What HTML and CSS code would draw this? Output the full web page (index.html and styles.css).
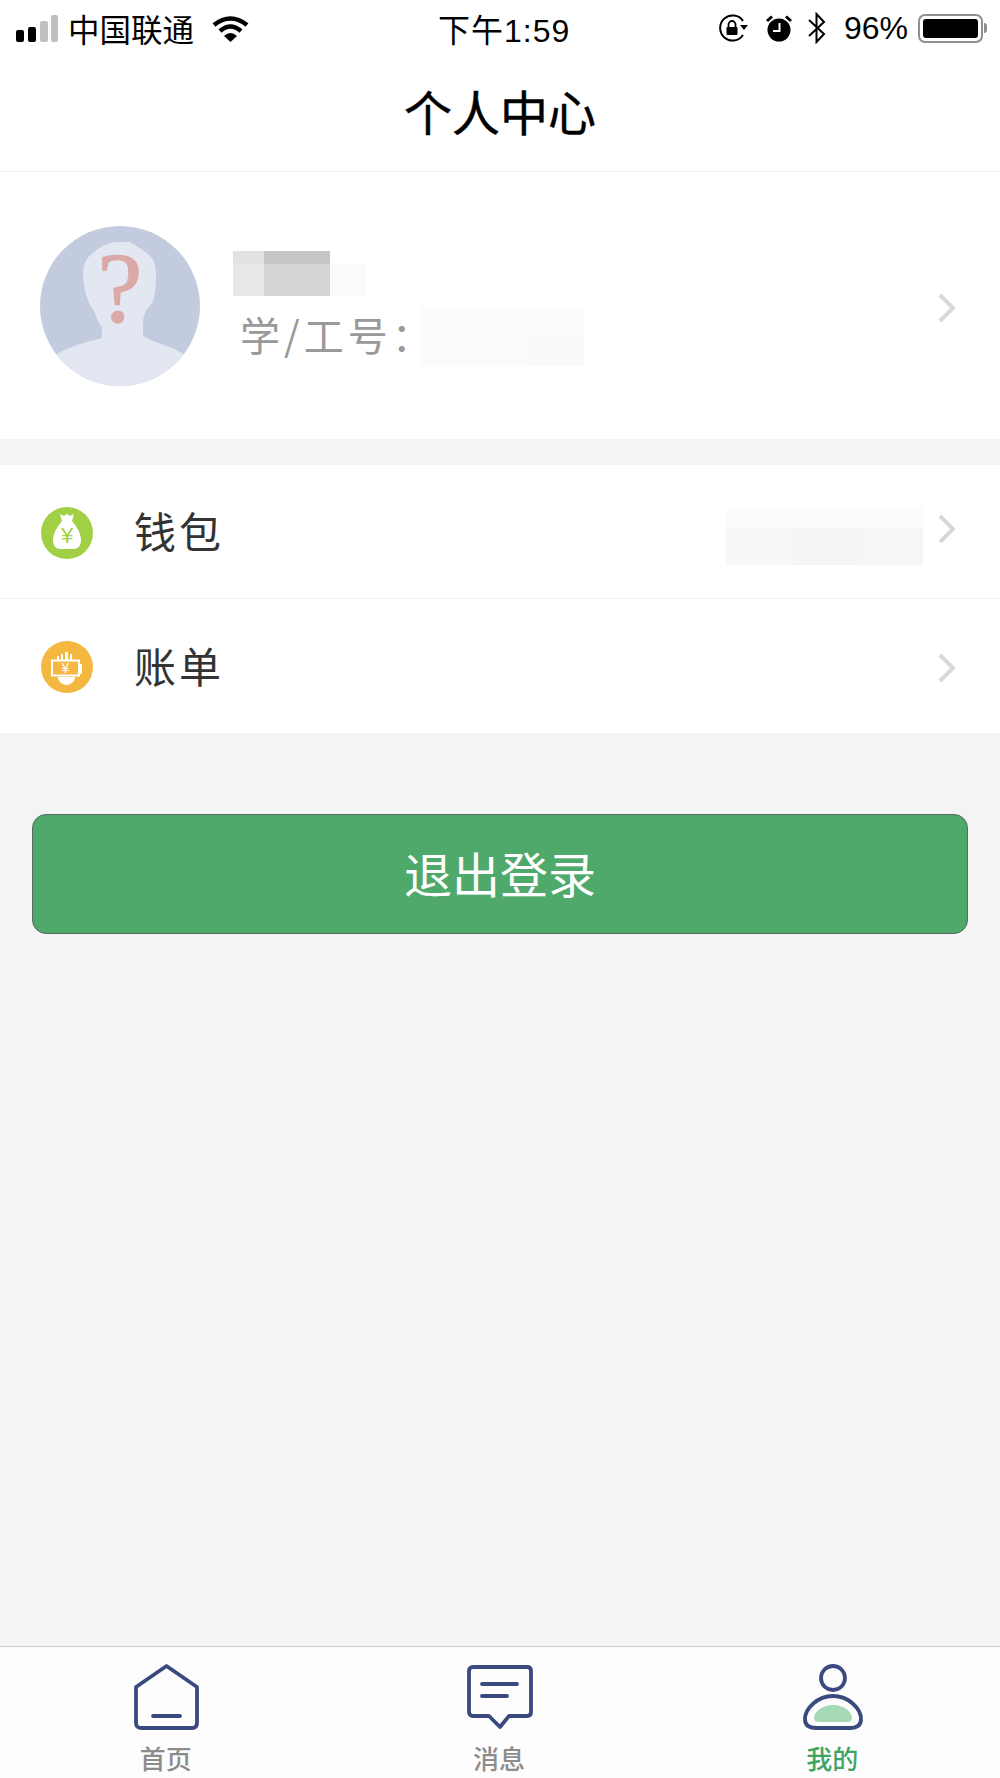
FILE: index.html
```html
<!DOCTYPE html>
<html>

<head>
    <meta charset="utf-8" />
    <title>个人中心</title>
    <link rel="stylesheet" href="styles.css">
</head>

<body>
    <div id="app">
        <div class="status">
            <div class="status-left">
                <svg class="signal" viewBox="0 0 42 27">
                    <rect x="0" y="15" width="8" height="12" rx="2" fill="#000" />
                    <rect x="12" y="12" width="8" height="15" rx="2" fill="#000" />
                    <rect x="24" y="6" width="8" height="21" rx="2" fill="#c0c0c0" />
                    <rect x="35" y="0" width="7" height="27" rx="2" fill="#c0c0c0" />
                </svg>
                <span class="carrier">中国联通</span>
                <svg class="wifi" viewBox="0 0 37 27">
                    <path d="M2 10 Q18.5 -3 35 10" fill="none" stroke="#000" stroke-width="4.5" />
                    <path d="M8 16 Q18.5 7 29 16" fill="none" stroke="#000" stroke-width="4.5" />
                    <path d="M12 21 Q18.5 15 25 21 L18.5 27 Z" fill="#000" />
                </svg>
            </div>
            <span class="time">下午1:59</span>
            <div class="status-right">
                <svg class="rotlock" viewBox="0 0 30 28">
                    <path d="M25 21 A12.5 12.5 0 1 1 25 7" fill="none" stroke="#000" stroke-width="2" />
                    <path d="M22 11 L30 11 L26 16 Z" fill="#000" />
                    <path d="M10.5 13 V10.5 A3.5 3.5 0 0 1 17.5 10.5 V13" fill="none" stroke="#000" stroke-width="1.8" />
                    <rect x="8.5" y="13" width="11" height="8" rx="1" fill="#000" />
                </svg>
                <svg class="alarm" viewBox="0 0 26 27">
                    <circle cx="13" cy="15" r="11.5" fill="#000" />
                    <path d="M1 6 L6 1.5 M25 6 L20 1.5" stroke="#000" stroke-width="3" />
                    <path d="M13.5 8 V16 H7" fill="none" stroke="#fff" stroke-width="2" />
                </svg>
                <svg class="bt" viewBox="0 0 20 32">
                    <path d="M2 8 L17 22 L9.5 30 V2 L17 10 L2 24" fill="none" stroke="#000" stroke-width="2" />
                </svg>
                <span class="battery-text">96%</span>
                <div class="battery">
                    <div class="battery-fill"></div>
                </div>
                <div class="battery-nub"></div>
            </div>
        </div>

        <div class="title">个人中心</div>

        <div class="main">
            <div class="profile">
                <svg class="avatar" viewBox="0 0 160 160">
                    <defs>
                        <clipPath id="round">
                            <circle cx="80" cy="80" r="80" />
                        </clipPath>
                    </defs>
                    <circle cx="80" cy="80" r="80" fill="#c3cbdf" />
                    <path clip-path="url(#round)" fill="#e3e7f1" d="M80 16 L90 16 C96 20 104 24 109 29 C115 34 116 40 116 50 C116 60 115 68 113 76 L107 83 C104 88 103 92 103 100 L103 110 L113 115 C124 119 134 122 145 129 L145 165 L15 165 L15 129 C26 123 36 119 50 115 L62 112 L62 102 C58 96 56 90 54 85 C49 78 47 72 45 65 C44 58 43 54 43 48 C43 38 46 32 52 28 C60 20 68 16 80 16 Z" />
                    <text class="avatar-mark" x="80" y="95" text-anchor="middle">?</text>
                </svg>
                <div class="profile-info">
                    <div class="mosaic mosaic-name">
                        <i class="t-e2"></i><i class="t-c6"></i><i class="t-ff"></i>
                        <i class="t-e8"></i><i class="t-d5"></i><i class="t-fb"></i>
                    </div>
                    <div class="id-row">
                        <span class="id-label">学/工号：</span>
                        <div class="mosaic mosaic-id">
                            <i class="t-fc"></i><i class="t-fc"></i><i class="t-fc"></i>
                            <i class="t-fb"></i><i class="t-fb"></i><i class="t-fa"></i>
                        </div>
                    </div>
                </div>
                <svg class="arrow arrow-low" viewBox="0 0 17 30">
                    <path d="M2 2 L15 15 L2 28" />
                </svg>
            </div>

            <div class="menu">
                <div class="menu-row line">
                    <svg class="menu-icon" viewBox="0 0 52 52">
                        <circle cx="26" cy="26" r="26" fill="#a2d045" />
                        <path fill="#fff" d="M19 7 L23 9 L26 7 L29 9 L33 7 L31 14 C35 19 40 26 40 33 C40 40 36 42 32 42 H20 C16 42 12 40 12 33 C12 26 17 19 21 14 Z" />
                        <text class="icon-yen yen-green" x="26" y="36" text-anchor="middle">¥</text>
                    </svg>
                    <span class="menu-text">钱包</span>
                    <div class="mosaic mosaic-wallet">
                        <i class="t-fc"></i><i class="t-fc"></i><i class="t-fc"></i>
                        <i class="t-f8"></i><i class="t-f5"></i><i class="t-f6"></i>
                    </div>
                    <svg class="arrow arrow-high" viewBox="0 0 17 30">
                        <path d="M2 2 L15 15 L2 28" />
                    </svg>
                </div>
                <div class="menu-row">
                    <svg class="menu-icon" viewBox="0 0 52 52">
                        <circle cx="26" cy="26" r="26" fill="#f4b740" />
                        <path fill="#fff" d="M16 19 V15 H18 V19 Z M20 19 V13 H22 V19 Z M24 19 V11 H27 V19 Z M29 19 V13 H31 V19 Z" />
                        <rect x="11" y="19.5" width="27" height="15" fill="none" stroke="#fff" stroke-width="2" />
                        <path fill="#fff" d="M39 23 H41 V33 H39 Z M17 36 H34 C34 40 30 44 25.5 44 C21 44 17 40 17 36 Z" />
                        <text class="icon-yen yen-orange" x="24.5" y="32" text-anchor="middle">¥</text>
                    </svg>
                    <span class="menu-text">账单</span>
                    <svg class="arrow arrow-low" viewBox="0 0 17 30">
                        <path d="M2 2 L15 15 L2 28" />
                    </svg>
                </div>
            </div>

            <div class="logout">退出登录</div>
        </div>

        <div class="tabs">
            <div class="tab">
                <svg class="tab-icon" viewBox="0 0 66 66">
                    <path class="tab-line" d="M32.5 2 L63 23 V59 Q63 64 58 64 H7 Q2 64 2 59 V23 Z" />
                    <path class="tab-line" d="M19 52 H46" />
                </svg>
                <span>首页</span>
            </div>
            <div class="tab">
                <svg class="tab-icon" viewBox="0 0 66 66">
                    <path class="tab-line" d="M6 3 H60 Q64 3 64 7 V48 Q64 52 60 52 H42 L33 63 L22 52 H6 Q2 52 2 48 V7 Q2 3 6 3 Z" />
                    <path class="tab-line" d="M15 20 H50 M15 32 H40" />
                </svg>
                <span>消息</span>
            </div>
            <div class="tab tab-on">
                <svg class="tab-icon" viewBox="0 0 62 66">
                    <circle class="tab-line" cx="31" cy="14" r="12" />
                    <path class="tab-line" d="M31 32 C47 32 59 45 59 55 C59 61 55 64 48 64 H14 C7 64 3 61 3 55 C3 45 15 32 31 32 Z" />
                    <path fill="#a5dab5" d="M31 41 C42 41 50 48 50 54 C50 57 48 58 44 58 H18 C14 58 12 57 12 54 C12 48 20 41 31 41 Z" />
                </svg>
                <span>我的</span>
            </div>
        </div>
    </div>
</body>

</html>
```

FILE: styles.css
```css
* {
    box-sizing: border-box;
}

body {
    margin: 0;
    padding: 0;
    font-family: "Liberation Sans", "Noto Sans CJK SC", sans-serif;
    background: #f4f4f4;
}

#app {
    display: flex;
    flex-direction: column;
    width: 1000px;
    height: 1778px;
    overflow: hidden;
}

/* status bar */
.status {
    display: flex;
    align-items: center;
    height: 56px;
    padding: 0 13px 0 16px;
    background: #fff;
    color: #000;
    font-size: 32px;
}

.status-left {
    display: flex;
    align-items: center;
    width: 422px;
}

.signal {
    width: 42px;
    height: 27px;
}

.carrier {
    margin-left: 10px;
    font-family: "Noto Sans CJK SC", sans-serif;
    font-size: 31.5px;
}

.wifi {
    width: 37px;
    height: 27px;
    margin-left: 18px;
}

.time {
    width: 132px;
    letter-spacing: 1px;
    white-space: nowrap;
}

.status-right {
    display: flex;
    align-items: center;
    margin-left: auto;
}

.rotlock {
    width: 30px;
    height: 28px;
}

.alarm {
    width: 26px;
    height: 27px;
    margin-left: 18px;
}

.bt {
    width: 20px;
    height: 32px;
    margin-left: 15px;
}

.battery-text {
    margin-left: 17px;
}

.battery {
    width: 65px;
    height: 29px;
    margin-left: 10px;
    padding: 3px;
    border: 2px solid #8f8f8f;
    border-radius: 7px;
}

.battery-fill {
    height: 100%;
    background: #000;
    border-radius: 3px;
}

.battery-nub {
    width: 3px;
    height: 10px;
    margin-left: 1px;
    background: #8f8f8f;
    border-radius: 0 3px 3px 0;
}

/* title */
.title {
    height: 116px;
    padding-top: 22px;
    border-bottom: 1px solid #eee;
    background: #fff;
    color: #000;
    font-size: 48px;
    line-height: 64px;
    text-align: center;
    -webkit-text-stroke: 0.5px #000;
    font-family: "Noto Sans CJK SC", sans-serif;
}

.main {
    flex: 1;
}

/* profile */
.profile {
    display: flex;
    align-items: center;
    height: 267px;
    padding: 0 45px 0 40px;
    background: #fff;
}

.avatar {
    width: 160px;
    height: 160px;
}

.avatar-mark {
    font-family: "Liberation Serif", serif;
    font-size: 100px;
    fill: #dba9a7;
    stroke: #dba9a7;
    stroke-width: 1.5;
}

.profile-info {
    flex: 1;
    margin-left: 33px;
    padding-top: 6px;
}

.mosaic {
    display: grid;
}

.mosaic-name {
    grid-template-columns: 31px 66px 36px;
    grid-template-rows: 13px 32px;
    width: 133px;
}

.mosaic-id {
    grid-template-columns: 41px 66px 56px;
    grid-template-rows: 24px 36px;
}

.mosaic-wallet {
    grid-template-columns: 67px 65px 65px;
    grid-template-rows: 22px 37px;
    margin-top: 8px;
    margin-right: 15px;
}

.t-ff { background: #fff; }
.t-fc { background: #fcfcfc; }
.t-fb { background: #fbfbfb; }
.t-fa { background: #fafafa; }
.t-f8 { background: #f8f8f8; }
.t-f6 { background: #f6f6f6; }
.t-f5 { background: #f5f5f5; }
.t-e8 { background: #e8e8e8; }
.t-e2 { background: #e2e2e2; }
.t-d5 { background: #d5d5d5; }
.t-c6 { background: #c6c6c6; }

.id-row {
    display: flex;
    margin-top: 10px;
}

.id-label {
    width: 188px;
    padding-left: 7px;
    color: #999;
    font-size: 40px;
    line-height: 56px;
    letter-spacing: 4px;
    white-space: nowrap;
    font-family: "Noto Sans CJK SC", sans-serif;
}

.arrow {
    flex: none;
    width: 17px;
    height: 30px;
}

.arrow-low {
    margin-top: 4px;
}

.arrow-high {
    margin-bottom: 6px;
}

.arrow path {
    fill: none;
    stroke: #d8d8d8;
    stroke-width: 4;
}

/* menu */
.menu {
    margin-top: 26px;
    background: #fff;
}

.menu-row {
    display: flex;
    align-items: center;
    height: 134px;
    padding: 0 45px 0 41px;
}

.line {
    border-bottom: 1px solid #f0f0f0;
}

.menu-icon {
    width: 52px;
    height: 52px;
    margin-top: 2px;
}

.icon-yen {
    font-family: "Liberation Sans", sans-serif;
}

.yen-green {
    font-size: 22px;
    fill: #a2d045;
}

.yen-orange {
    font-size: 14px;
    fill: #fff;
}

.menu-text {
    flex: 1;
    margin-left: 41px;
    margin-bottom: 4px;
    color: #333;
    font-size: 42px;
    letter-spacing: 3px;
    font-family: "Noto Sans CJK SC", sans-serif;
}

/* button */
.logout {
    height: 120px;
    margin: 81px 32px 0;
    border: 1px solid #5c6b61;
    border-radius: 14px;
    background: #4fa96b;
    color: #fff;
    font-size: 48px;
    line-height: 114px;
    text-align: center;
    font-family: "Noto Sans CJK SC", sans-serif;
}

/* tab bar */
.tabs {
    display: flex;
    height: 132px;
    border-top: 1px solid #ccc;
    background: #fdfdfd;
}

.tab {
    display: flex;
    flex-direction: column;
    align-items: center;
    flex: 1;
    padding-top: 17px;
    color: #8c8c8c;
    font-size: 26px;
    font-weight: 500;
    line-height: 36px;
    font-family: "Noto Sans CJK SC", sans-serif;
}

.tab span {
    margin-top: 10px;
    margin-right: 2px;
}

.tab-on {
    color: #3fa564;
}

.tab-icon {
    height: 66px;
    width: 66px;
}

.tab-line {
    fill: none;
    stroke: #3b4a7e;
    stroke-width: 3.8;
    stroke-linejoin: round;
    stroke-linecap: round;
}
```
